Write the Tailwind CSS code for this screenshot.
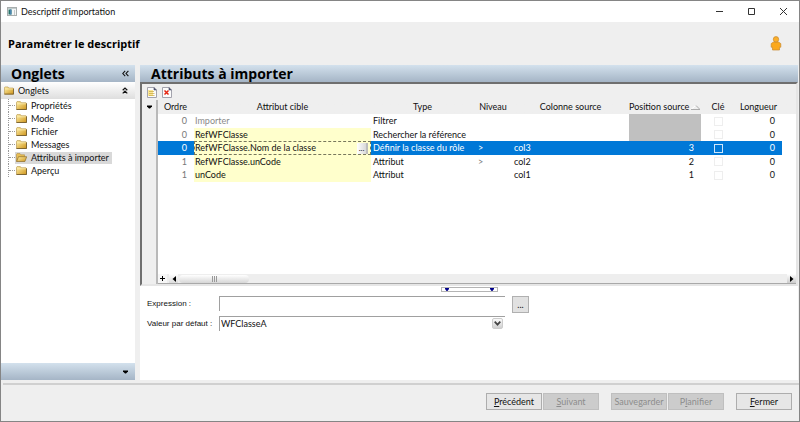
<!DOCTYPE html>
<html lang="fr">
<head>
    <meta charset="UTF-8">
    <meta name="viewport" content="width=device-width, initial-scale=1.0">
    <title>Descriptif d'importation</title>
    <script src="https://cdn.jsdelivr.net/npm/@tailwindcss/browser@4"></script>
</head>
<body class="h-screen overflow-hidden bg-[#efefef] font-['Lato','Noto_Sans',sans-serif] text-[9px] leading-3 text-[#111]">
    <!-- Dégradés et dossiers réutilisés -->
    <svg class="absolute size-0" aria-hidden="true">
        <defs>
            <linearGradient id="gold" x1="0" y1="0" x2="1" y2="1">
                <stop offset="0" stop-color="#fff0a8"/>
                <stop offset="1" stop-color="#cf951c"/>
            </linearGradient>
            <symbol id="folder" viewBox="0 0 11 9">
                <path d="M.5 8.5V1.2L1 .6h3.4l.9 1.2h4.6l.6.5v6.2z" fill="url(#gold)" stroke="#b08d3f" stroke-width=".6"/>
                <path d="M1.2 2.8h8.6" stroke="#fff4bd" stroke-width=".7"/>
                <path d="M.5 8.5h10V2.5" fill="none" stroke="#6b5426" stroke-width=".8"/>
            </symbol>
            <symbol id="folder-open" viewBox="0 0 11 9">
                <path d="M.5 8.5V1.2L1 .6h3l.9 1.2h3.6v2" fill="#e9bf55" stroke="#b08d3f" stroke-width=".6"/>
                <path d="M.6 8.5 2.5 3.7h8.2L8.9 8.5z" fill="url(#gold)" stroke="#8d6c28" stroke-width=".7"/>
            </symbol>
            <symbol id="sheet" viewBox="0 0 10 11">
                <path d="M.5.5H7l2.5 2.4v7.6h-9z" fill="#fbfbfb" stroke="#a3a3ad"/>
                <path d="M7 .5v2.4h2.5" fill="#4e536f" stroke="#4e536f" stroke-width=".7"/>
            </symbol>
        </defs>
    </svg>

    <div class="flex h-full flex-col border border-[#858585]">
        <!-- Barre de titre -->
        <header class="flex h-[21px] shrink-0 items-center bg-white pl-[6px]">
            <svg class="mr-[4px] h-[9px] w-[10px]" viewBox="0 0 10 9">
                <rect x=".5" y=".5" width="9" height="8" fill="#f4f6f6" stroke="#a7adad"/>
                <path d="M1 1h8v1H1z" fill="#c3cccd"/>
                <path d="M1.5 2.5h3v5h-3z" fill="#27736b"/>
                <path d="M3 2.5h1.5v5H3z" fill="#4b86b0"/>
                <path d="M7.5 3v5" stroke="#c5cbcb"/>
            </svg>
            <h1 class="flex-1">Descriptif d'importation</h1>
            <button type="button" class="flex h-full w-8 items-center justify-center" aria-label="Réduire">
                <svg class="size-[9px]" viewBox="0 0 9 9" stroke="#333"><path d="M1 4.5h7"/></svg>
            </button>
            <button type="button" class="flex h-full w-8 items-center justify-center" aria-label="Agrandir">
                <svg class="size-[9px]" viewBox="0 0 9 9" fill="none" stroke="#333"><path d="M1.500 1.500h6v6h-6z"/></svg>
            </button>
            <button type="button" class="flex h-full w-8 items-center justify-center" aria-label="Fermer la fenêtre">
                <svg class="size-[9px]" viewBox="0 0 9 9" stroke="#333"><path d="m1 1 7 7M8 1 1 8"/></svg>
            </button>
        </header>

        <div class="flex h-[43px] shrink-0 items-center justify-between pr-[17px] pl-[7px]">
            <h2 class="font-['Open_Sans',sans-serif] text-[11px] leading-4 font-bold text-black">Paramétrer le descriptif</h2>
            <svg class="h-[15px] w-[12px]" viewBox="0 0 12 15">
                <path d="M3.500 6h5l2.300 1.600v3.600H9.500V14h-7v-2.800H1.200V7.600z" fill="#fba81c" stroke="#c98a31" stroke-width=".7"/>
                <circle cx="6" cy="3.300" r="2.700" fill="#fbaf2b" stroke="#c98a31" stroke-width=".7"/>
            </svg>
        </div>

        <main class="flex min-h-0 flex-1 gap-[5px]">
            <!-- Onglets -->
            <aside class="flex w-[134px] shrink-0 flex-col bg-white">
                <div class="flex h-[17px] shrink-0 items-center justify-between overflow-hidden bg-linear-to-b from-[#d3e1ed] to-[#a5b5c6] pr-[6px] pl-[10px]">
                    <h3 class="font-['Open_Sans',sans-serif] text-[14px] leading-[18px] font-bold text-black">Onglets</h3>
                    <button type="button" aria-label="Masquer le volet">
                        <svg class="size-[7px]" viewBox="0 0 7 7" fill="none" stroke="#111" stroke-width="1.100"><path d="M3.200.8.8 3.500l2.400 2.700M6.400.8 4 3.500l2.400 2.700"/></svg>
                    </button>
                </div>
                <div class="flex h-[17px] shrink-0 items-center bg-linear-to-b from-white to-[#dedede] pr-[7px] pl-[3px]">
                    <svg class="mr-[4px] h-[9px] w-[10px]"><use href="#folder"/></svg>
                    <span class="flex-1">Onglets</span>
                    <button type="button" aria-label="Replier">
                        <svg class="h-[7px] w-[6px]" viewBox="0 0 6 7" fill="none" stroke="#111" stroke-width="1.200"><path d="M.7 3.200 3 1l2.300 2.200M.7 6.400 3 4.200l2.300 2.200"/></svg>
                    </button>
                </div>
                <ul class="ml-[7px] flex-1">
                    <li class="flex h-[13px] items-center border-l border-dotted border-[#999]"><i class="w-[6px] border-t border-dotted border-[#999]"></i><a href="#" class="flex items-center gap-[4px] pr-[3px]"><svg class="ml-px h-[9px] w-[11px]"><use href="#folder"/></svg>Propriétés</a></li>
                    <li class="flex h-[13px] items-center border-l border-dotted border-[#999]"><i class="w-[6px] border-t border-dotted border-[#999]"></i><a href="#" class="flex items-center gap-[4px] pr-[3px]"><svg class="ml-px h-[9px] w-[11px]"><use href="#folder"/></svg>Mode</a></li>
                    <li class="flex h-[13px] items-center border-l border-dotted border-[#999]"><i class="w-[6px] border-t border-dotted border-[#999]"></i><a href="#" class="flex items-center gap-[4px] pr-[3px]"><svg class="ml-px h-[9px] w-[11px]"><use href="#folder"/></svg>Fichier</a></li>
                    <li class="flex h-[13px] items-center border-l border-dotted border-[#999]"><i class="w-[6px] border-t border-dotted border-[#999]"></i><a href="#" class="flex items-center gap-[4px] pr-[3px]"><svg class="ml-px h-[9px] w-[11px]"><use href="#folder"/></svg>Messages</a></li>
                    <li class="flex h-[13px] items-center border-l border-dotted border-[#999]"><i class="w-[6px] border-t border-dotted border-[#999]"></i><a href="#" class="flex items-center gap-[4px] bg-[#d9d9d9] pr-[3px]" aria-current="page"><svg class="ml-px h-[9px] w-[11px]"><use href="#folder-open"/></svg>Attributs à importer</a></li>
                    <li class="flex h-[13px] items-center border-l border-dotted border-[#999]"><i class="w-[6px] border-t border-dotted border-[#999]"></i><a href="#" class="flex items-center gap-[4px] pr-[3px]"><svg class="ml-px h-[9px] w-[11px]"><use href="#folder"/></svg>Aperçu</a></li>
                </ul>
                <div class="flex h-[17px] shrink-0 items-center justify-end bg-linear-to-b from-[#d3e1ed] to-[#a5b5c6] pr-[7px]">
                    <button type="button" aria-label="Autres volets"><svg class="h-[4px] w-[5px]" viewBox="0 0 5 4"><path d="M0 .5h5v1L3 3.500H2L0 1.500z"/></svg></button>
                </div>
            </aside>

            <!-- Attributs -->
            <section class="flex min-w-0 flex-1 flex-col bg-white">
                <div class="flex h-[17px] shrink-0 items-center overflow-hidden bg-linear-to-b from-[#d3e1ed] to-[#a5b5c6] pl-[11px]">
                    <h3 class="font-['Open_Sans',sans-serif] text-[14px] leading-[18px] font-bold text-black">Attributs à importer</h3>
                </div>
                <div class="flex h-[204px] shrink-0 flex-col border-t-2 border-r-2 border-b-2 border-l-2 border-t-[#6f6f6f] border-r-[#e6e6e6] border-b-[#e6e6e6] border-l-[#6f6f6f]">
                    <div class="flex h-[16px] shrink-0 items-center gap-[5px] bg-[#efefef] pl-[5px]">
                        <button type="button" aria-label="Nouveau">
                            <svg class="h-[11px] w-[10px]" viewBox="0 0 10 11"><use href="#sheet"/><path d="M1 3h5v6H1z" fill="#fbe695"/><path d="M2 4.500h5M2 6.500h5.500M2 8.500h5.500" stroke="#c4a640" stroke-width=".7"/></svg>
                        </button>
                        <button type="button" aria-label="Supprimer">
                            <svg class="h-[11px] w-[10px]" viewBox="0 0 10 11"><use href="#sheet"/><path d="m2.500 3.500 4 4M6.500 3.500l-4 4" stroke="#e5230f" stroke-width="1.500"/></svg>
                        </button>
                    </div>
                    <div class="flex min-h-0 flex-1">
                        <div class="flex w-[16px] shrink-0 justify-center border-r-2 border-[#b9b9b9] bg-[#efefef] pt-[5px]">
                            <button type="button" class="h-[4px]" aria-label="Options du tableau"><svg class="h-[4px] w-[5px]" viewBox="0 0 5 4"><path d="M0 .5h5v1L3 3.500H2L0 1.500z"/></svg></button>
                        </div>
                        <div class="flex min-w-0 flex-1 flex-col">
                            <div class="min-h-0 flex-1 bg-linear-to-b from-[#efefef] from-[14px] to-white to-[14px] pr-[14px]">
                                <table class="w-full table-fixed border-collapse whitespace-nowrap">
                                    <colgroup>
                                        <col class="w-[36px]"><col class="w-[177px]"><col class="w-[103px]"><col class="w-[38px]"><col><col class="w-[72px]"><col class="w-[34px]"><col class="w-[47px]">
                                    </colgroup>
                                    <thead>
                                        <tr class="h-[14px] *:p-0 *:font-normal">
                                            <th class="text-right"><span class="pr-[7px]">Ordre</span></th>
                                            <th>Attribut cible</th>
                                            <th>Type</th>
                                            <th>Niveau</th>
                                            <th>Colonne source</th>
                                            <th class="text-left"><span class="flex items-center justify-between">Position source<svg class="mr-px h-[5px] w-[9px] shrink-0" viewBox="0 0 9 5" fill="none"><path d="M0 4.500 4.500.5" stroke="#fff"/><path d="M0 4.500h9L5 .5" stroke="#aaa"/></svg></span></th>
                                            <th>Clé</th>
                                            <th>Longueur</th>
                                        </tr>
                                    </thead>
                                    <tbody class="*:odd:h-[14px] *:even:h-[13px]">
                                        <tr class="*:p-0">
                                            <td class="text-right text-[#777]"><span class="pr-[7px]">0</span></td>
                                            <td class="text-[#8a8a8a]"><span class="pl-px">Importer</span></td>
                                            <td><span class="pl-[2px]">Filtrer</span></td>
                                            <td></td>
                                            <td></td>
                                            <td class="bg-[#c0c0c0]"></td>
                                            <td><input type="checkbox" aria-label="Clé Importer" class="mx-auto block size-[9px] appearance-none border border-[#eee]"></td>
                                            <td class="text-right"><span class="pr-[7px]">0</span></td>
                                        </tr>
                                        <tr class="*:p-0">
                                            <td class="text-right text-[#777]"><span class="pr-[7px]">0</span></td>
                                            <td class="bg-[#ffffcc]"><span class="pl-px">RefWFClasse</span></td>
                                            <td><span class="pl-[2px]">Rechercher la référence</span></td>
                                            <td></td>
                                            <td></td>
                                            <td class="bg-[#c0c0c0]"></td>
                                            <td><input type="checkbox" aria-label="Clé RefWFClasse" class="mx-auto block size-[9px] appearance-none border border-[#eee]"></td>
                                            <td class="text-right"><span class="pr-[7px]">0</span></td>
                                        </tr>
                                        <tr class="bg-[#0078d7] text-white *:p-0">
                                            <td class="text-right"><span class="pr-[7px]">0</span></td>
                                            <td class="bg-[#ffffcc] text-[#111]"><span class="flex h-[14px] items-center justify-between border border-dashed border-[#77775c]">RefWFClasse.Nom de la classe<button type="button" class="mr-[2px] h-[11px] w-[11px] border-r-2 border-[#bdbdbd] bg-linear-to-r from-white to-[#d9d9d9] text-[8px] leading-[9px]">...</button></span></td>
                                            <td><span class="pl-[2px]">Définir la classe du rôle</span></td>
                                            <td><span class="pl-[4px]">&gt;</span></td>
                                            <td><span class="pl-[2px]">col3</span></td>
                                            <td class="text-right"><span class="pr-[7px]">3</span></td>
                                            <td><input type="checkbox" aria-label="Clé RefWFClasse.Nom de la classe" class="mx-auto block size-[9px] appearance-none border border-[#cfe6fa]"></td>
                                            <td class="text-right"><span class="pr-[7px]">0</span></td>
                                        </tr>
                                        <tr class="*:p-0">
                                            <td class="text-right text-[#777]"><span class="pr-[7px]">1</span></td>
                                            <td class="bg-[#ffffcc]"><span class="pl-px">RefWFClasse.unCode</span></td>
                                            <td><span class="pl-[2px]">Attribut</span></td>
                                            <td class="text-[#777]"><span class="pl-[4px]">&gt;</span></td>
                                            <td><span class="pl-[2px]">col2</span></td>
                                            <td class="text-right"><span class="pr-[7px]">2</span></td>
                                            <td><input type="checkbox" aria-label="Clé RefWFClasse.unCode" class="mx-auto block size-[9px] appearance-none border border-[#eee]"></td>
                                            <td class="text-right"><span class="pr-[7px]">0</span></td>
                                        </tr>
                                        <tr class="*:p-0">
                                            <td class="text-right text-[#777]"><span class="pr-[7px]">1</span></td>
                                            <td class="bg-[#ffffcc]"><span class="pl-px">unCode</span></td>
                                            <td><span class="pl-[2px]">Attribut</span></td>
                                            <td></td>
                                            <td><span class="pl-[2px]">col1</span></td>
                                            <td class="text-right"><span class="pr-[7px]">1</span></td>
                                            <td><input type="checkbox" aria-label="Clé unCode" class="mx-auto block size-[9px] appearance-none border border-[#eee]"></td>
                                            <td class="text-right"><span class="pr-[7px]">0</span></td>
                                        </tr>
                                    </tbody>
                                </table>
                            </div>
                            <!-- Barre de défilement horizontale -->
                            <div class="flex h-[10px] shrink-0 items-center border-b border-[#a9a9a9] bg-[#eee]">
                                <button type="button" class="flex size-[9px] items-center justify-center bg-[#f7f7f7]" aria-label="Ajouter"><svg class="size-[5px]" viewBox="0 0 5 5" stroke="#000"><path d="M0 2.500h5M2.500 0v5"/></svg></button>
                                <button type="button" class="ml-[2px] flex size-[9px] items-center justify-center bg-linear-to-b from-white to-[#ddd]" aria-label="Défiler à gauche"><svg class="h-[6px] w-[4px]" viewBox="0 0 4 6"><path d="M4 0v6L.5 3z"/></svg></button>
                                <span class="ml-px flex h-[8px] w-[70px] items-center justify-center gap-px rounded-sm bg-linear-to-b from-white to-[#d6d6d6]"><i class="h-[6px] w-px bg-[#999]"></i><i class="h-[6px] w-px bg-[#999]"></i><i class="h-[6px] w-px bg-[#999]"></i></span>
                                <button type="button" class="ml-auto flex size-[9px] items-center justify-center bg-linear-to-b from-white to-[#ccc]" aria-label="Défiler à droite"><svg class="h-[6px] w-[4px]" viewBox="0 0 4 6"><path d="M0 0v6l3.500-3z"/></svg></button>
                            </div>
                        </div>
                    </div>
                </div>
                <button type="button" class="mx-auto mt-px flex h-[5px] w-[57px] shrink-0 items-center justify-between border border-[#b4b4b4] px-[3px]" aria-label="Séparateur">
                    <svg class="h-[3px] w-[4px]" viewBox="0 0 4 3"><path d="M0 0h4v1L2.500 3h-1L0 1z" fill="#00008b"/></svg>
                    <svg class="h-[3px] w-[4px]" viewBox="0 0 4 3"><path d="M0 0h4v1L2.500 3h-1L0 1z" fill="#00008b"/></svg>
                </button>
                <form class="mt-[4px] grid grid-cols-[65px_minmax(0,286px)_17px] items-start gap-x-[7px] gap-y-[3px] pl-[7px]">
                    <label for="expression" class="pt-[2px] font-['Liberation_Sans',sans-serif] text-[8px] whitespace-nowrap">Expression :</label>
                    <input type="text" id="expression" class="h-[15px] w-full border-t border-l border-[#a0a0a0] px-px outline-none">
                    <button type="button" class="h-[17px] w-full border border-[#b0b0b0] bg-[#e1e1e1] leading-[14px]" aria-label="Modifier l'expression">...</button>
                    <label for="defaut" class="pt-[2px] font-['Liberation_Sans',sans-serif] text-[8px] whitespace-nowrap">Valeur par défaut :</label>
                    <div class="relative">
                        <select id="defaut" class="block h-[15px] w-full appearance-none border-t border-l border-[#a0a0a0] px-px leading-3 outline-none">
                            <option>WFClasseA</option>
                        </select>
                        <span class="pointer-events-none absolute top-[2px] right-[2px] flex size-[11px] items-center justify-center rounded-xs border border-[#ccc] bg-linear-to-b from-[#fafafa] to-[#d0d0d0]"><svg class="h-[5px] w-[7px]" viewBox="0 0 7 5" fill="none" stroke="#444" stroke-width="1.700"><path d="m.7.7 2.800 3L6.300.7"/></svg></span>
                    </div>
                </form>
            </section>
            <div class="-ml-[5px] w-px shrink-0"></div>
        </main>

        <footer class="mt-[3px] ml-[2px] flex h-[38px] shrink-0 items-start justify-end border-t-2 border-[#d0d0d0] pt-[8px] pr-[7px]">
            <button type="button" class="h-[17px] w-[56px] border border-[#adadad] bg-[#e6e6e6] leading-[15px]"><u>P</u>récédent</button>
            <button type="button" disabled class="ml-px h-[17px] w-[56px] border border-[#bfbfbf] bg-[#cccccc] leading-[15px] text-[#8c8c8c]"><u>S</u>uivant</button>
            <button type="button" disabled class="ml-[12px] h-[17px] w-[56px] border border-[#bfbfbf] bg-[#cccccc] leading-[15px] text-[#8c8c8c]">Sauvegarder</button>
            <button type="button" disabled class="ml-px h-[17px] w-[56px] border border-[#bfbfbf] bg-[#cccccc] leading-[15px] text-[#8c8c8c]">P<u>l</u>anifier</button>
            <button type="button" class="ml-[12px] h-[17px] w-[56px] border border-[#adadad] bg-[#e6e6e6] leading-[15px]"><u>F</u>ermer</button>
        </footer>
    </div>
</body>
</html>
